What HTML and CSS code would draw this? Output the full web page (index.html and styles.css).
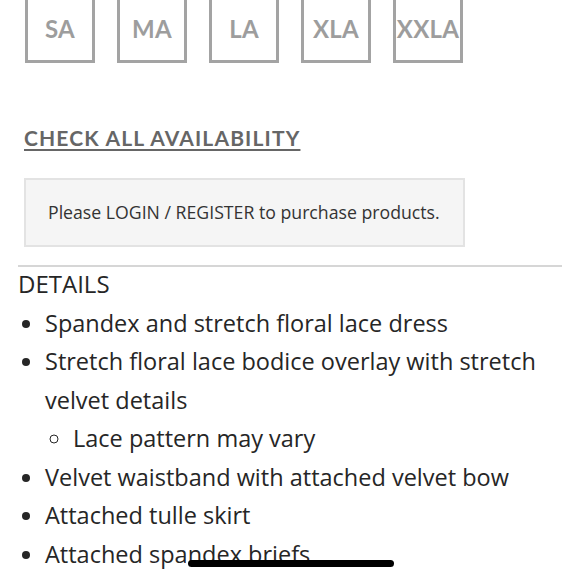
FILE: index.html
```html
<!DOCTYPE html>
<html lang="en">
<head>
<meta charset="utf-8">
<title>Product details</title>
<link rel="stylesheet" href="styles.css">
</head>
<body>
<div class="page">
  <div class="sizes">
    <div class="size">SA</div>
    <div class="size">MA</div>
    <div class="size">LA</div>
    <div class="size">XLA</div>
    <div class="size">XXLA</div>
  </div>
  <a class="check" href="#">CHECK ALL AVAILABILITY</a>
  <div class="notice">Please LOGIN / REGISTER to purchase products.</div>
  <div class="divider"></div>
  <div class="details">
    <div class="details-title">DETAILS</div>
    <ul class="list">
      <li>Spandex and stretch floral lace dress</li>
      <li>Stretch floral lace bodice overlay with stretch velvet details
        <ul class="sublist">
          <li>Lace pattern may vary</li>
        </ul>
      </li>
      <li>Velvet waistband with attached velvet bow</li>
      <li>Attached tulle skirt</li>
      <li>Attached spandex briefs</li>
    </ul>
  </div>
</div>
<div class="home-indicator"></div>
</body>
</html>
```

FILE: styles.css
```css
html, body {
  margin: 0;
  padding: 0;
  background: #ffffff;
  overflow: hidden;
}

body {
  font-family: "Open Sans", Lato, "Liberation Sans", sans-serif;
  color: #2a2a2a;
}

.page {
  padding: 0 18px;
}

.sizes {
  display: flex;
  gap: 22px;
  margin-top: -7px;
  padding-left: 7px;
}

.size {
  width: 70px;
  height: 70px;
  box-sizing: border-box;
  border: 3px solid #a3a3a3;
  display: flex;
  align-items: center;
  justify-content: center;
  font-family: Lato, "Open Sans", sans-serif;
  font-size: 24px;
  font-weight: 700;
  color: #9d9d9d;
  letter-spacing: 0.3px;
}

.check {
  display: block;
  margin-top: 63px;
  margin-left: 6px;
  line-height: 24px;
  font-family: Lato, "Open Sans", sans-serif;
  font-size: 21px;
  font-weight: 700;
  letter-spacing: 1.15px;
  color: #666666;
  text-decoration: underline;
  text-decoration-thickness: 2px;
  text-underline-offset: 3px;
}

.notice {
  margin-top: 28px;
  margin-left: 6px;
  width: 441px;
  height: 69px;
  box-sizing: border-box;
  border: 2px solid #e3e3e3;
  background: #f5f5f5;
  display: flex;
  align-items: center;
  padding-left: 22px;
  padding-bottom: 1px;
  font-size: 17.7px;
  color: #333333;
}

.divider {
  margin-top: 18px;
  width: 544px;
  height: 2px;
  background: #d6d6d6;
}

.details {
  margin-top: -2px;
  font-size: 23.5px;
  line-height: 38.5px;
  color: #262626;
}

.details-title {
  font-size: 24px;
}

.list {
  margin: 0;
  padding-left: 27px;
  list-style: disc;
}

.sublist {
  margin: 0;
  padding-left: 28px;
  list-style: circle;
}

.home-indicator {
  position: fixed;
  left: 188px;
  top: 560px;
  width: 206px;
  height: 7px;
  border-radius: 4px;
  background: #000000;
}
```
